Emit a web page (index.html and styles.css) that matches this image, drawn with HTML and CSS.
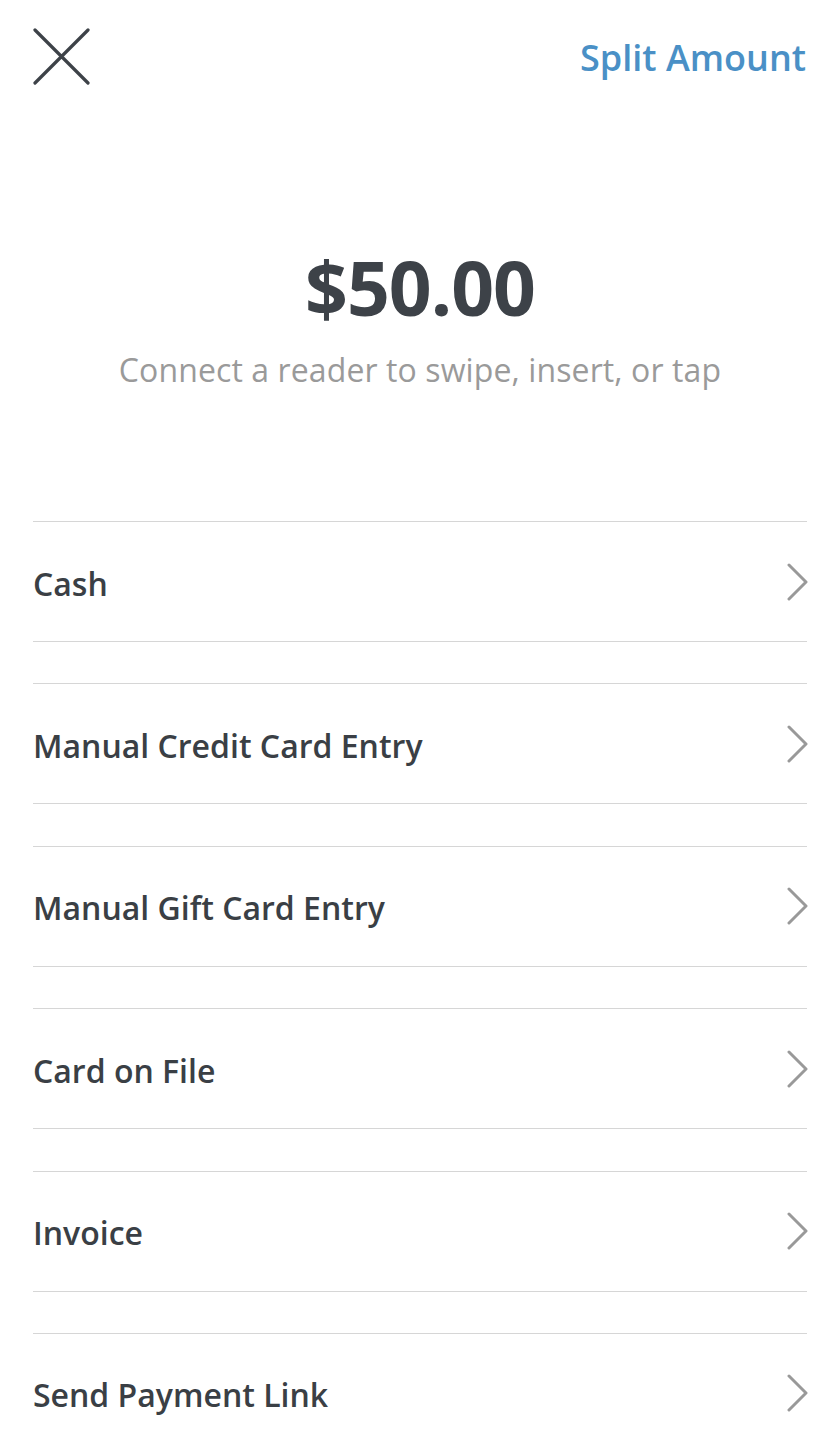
FILE: index.html
```html
<!DOCTYPE html>
<html lang="en">
<head>
    <meta charset="UTF-8">
    <meta name="viewport" content="width=device-width, initial-scale=1.0">
    <title>Payment</title>
    <link rel="stylesheet" href="styles.css">
</head>
<body>
    <header class="top-bar">
        <button class="close-btn" aria-label="Close">
            <svg width="58" height="58" viewBox="0 0 58 58">
                <path d="M2 2 L55 55 M55 2 L2 55" stroke="#3d4248" stroke-width="3.2" stroke-linecap="round" fill="none"/>
            </svg>
        </button>
        <a class="split-link" href="#">Split Amount</a>
    </header>

    <section class="amount">
        <div class="amount-value">$50.00</div>
        <div class="amount-hint">Connect a reader to swipe, insert, or tap</div>
    </section>

    <ul class="options">
        <li class="option"><span>Cash</span><svg class="chev" width="22" height="38" viewBox="0 0 22 38"><path d="M2 2 L19 19 L2 36" stroke="#999" stroke-width="3" stroke-linecap="round" stroke-linejoin="round" fill="none"/></svg></li>
        <li class="option"><span>Manual Credit Card Entry</span><svg class="chev" width="22" height="38" viewBox="0 0 22 38"><path d="M2 2 L19 19 L2 36" stroke="#999" stroke-width="3" stroke-linecap="round" stroke-linejoin="round" fill="none"/></svg></li>
        <li class="option"><span>Manual Gift Card Entry</span><svg class="chev" width="22" height="38" viewBox="0 0 22 38"><path d="M2 2 L19 19 L2 36" stroke="#999" stroke-width="3" stroke-linecap="round" stroke-linejoin="round" fill="none"/></svg></li>
        <li class="option"><span>Card on File</span><svg class="chev" width="22" height="38" viewBox="0 0 22 38"><path d="M2 2 L19 19 L2 36" stroke="#999" stroke-width="3" stroke-linecap="round" stroke-linejoin="round" fill="none"/></svg></li>
        <li class="option"><span>Invoice</span><svg class="chev" width="22" height="38" viewBox="0 0 22 38"><path d="M2 2 L19 19 L2 36" stroke="#999" stroke-width="3" stroke-linecap="round" stroke-linejoin="round" fill="none"/></svg></li>
        <li class="option"><span>Send Payment Link</span><svg class="chev" width="22" height="38" viewBox="0 0 22 38"><path d="M2 2 L19 19 L2 36" stroke="#999" stroke-width="3" stroke-linecap="round" stroke-linejoin="round" fill="none"/></svg></li>
    </ul>
</body>
</html>
```

FILE: styles.css
```css
body {
    font-family: "Open Sans", Arial, sans-serif;
    background-color: #fff;
    color: #3a3f45;
    margin: 0;
    padding: 0 33px;
}

.top-bar {
    display: flex;
    justify-content: space-between;
    align-items: flex-start;
    height: 86px;
    padding-top: 28px;
    box-sizing: border-box;
}

.close-btn {
    background: none;
    border: none;
    padding: 0;
    width: 58px;
    height: 58px;
    cursor: pointer;
}

.close-btn svg {
    display: block;
}

.split-link {
    color: #4a90c6;
    font-size: 36px;
    font-weight: 600;
    line-height: 1;
    text-decoration: none;
    margin-right: 1px;
    margin-top: 12px;
}

.amount {
    text-align: center;
    padding-top: 164px;
    height: 435px;
    box-sizing: border-box;
}

.amount-value {
    font-size: 75px;
    font-weight: 700;
    color: #3d4248;
    line-height: 1;
    letter-spacing: -1px;
}

.amount-hint {
    font-size: 32px;
    color: #9a9a9a;
    margin-top: 23px;
    letter-spacing: 0.1px;
}

.options {
    list-style: none;
    margin: 0;
    padding: 0;
}

.option {
    display: flex;
    justify-content: space-between;
    align-items: center;
    height: 121px;
    border-top: 1px solid #d6d6d6;
    border-bottom: 1px solid #d6d6d6;
    box-sizing: border-box;
    margin-bottom: 41.4px;
    padding-top: 3px;
    font-size: 32px;
    font-weight: 600;
    color: #3a3f45;
}

.chev {
    display: block;
    margin-right: -2px;
    margin-top: -3px;
}
```
